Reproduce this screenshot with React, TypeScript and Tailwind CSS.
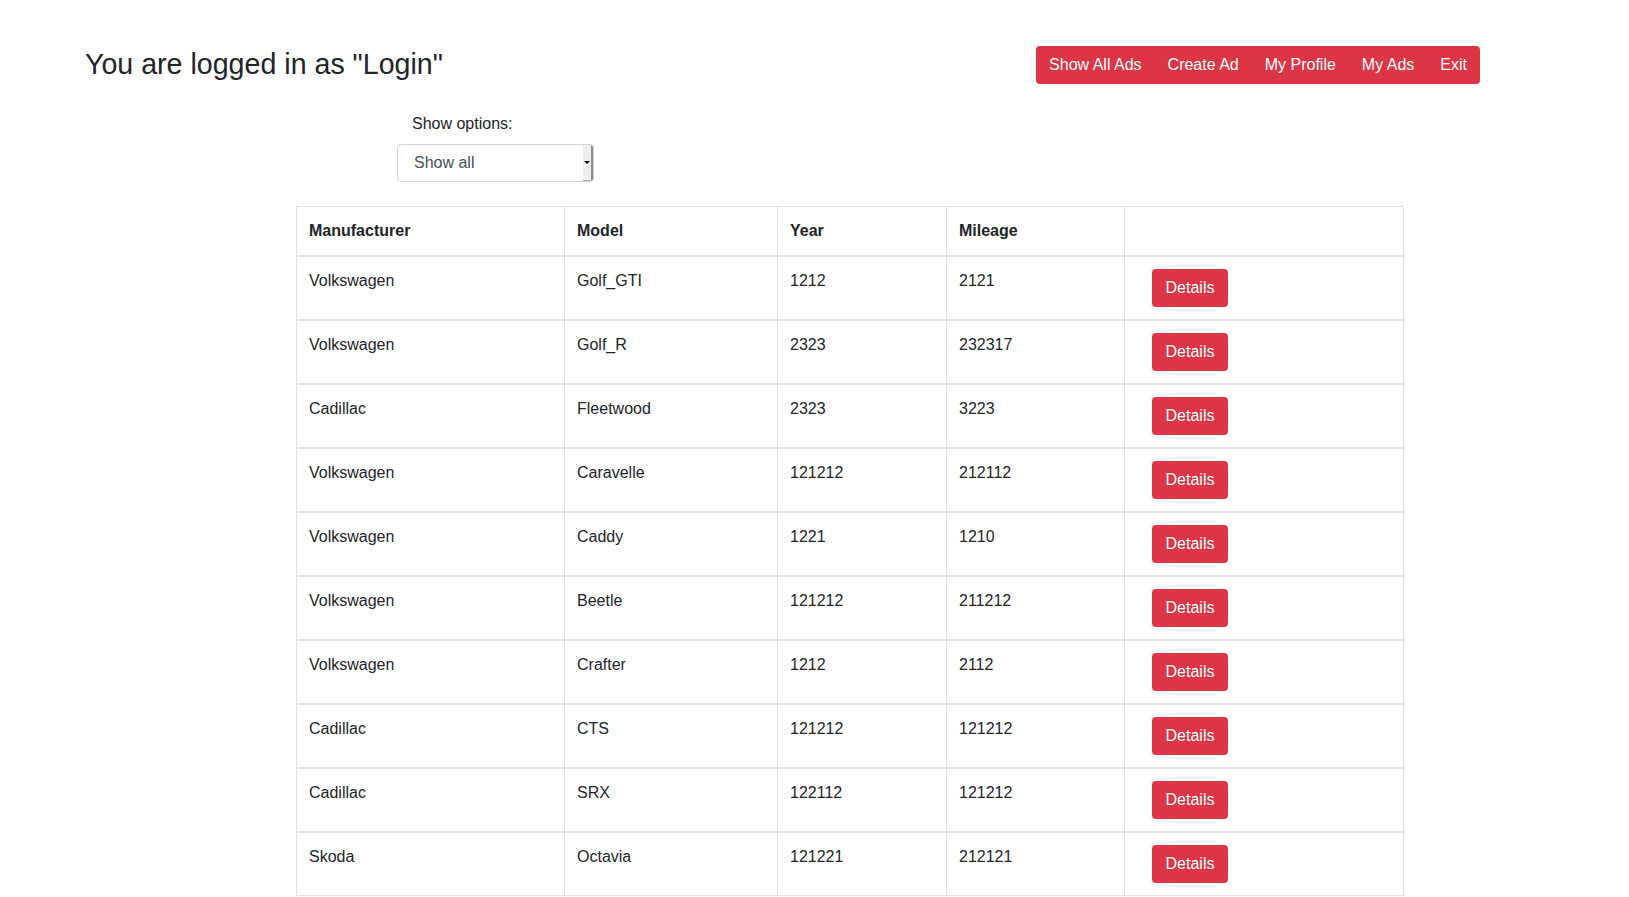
import React from "react";

const rows = [
  ["Volkswagen", "Golf_GTI", "1212", "2121"],
  ["Volkswagen", "Golf_R", "2323", "232317"],
  ["Cadillac", "Fleetwood", "2323", "3223"],
  ["Volkswagen", "Caravelle", "121212", "212112"],
  ["Volkswagen", "Caddy", "1221", "1210"],
  ["Volkswagen", "Beetle", "121212", "211212"],
  ["Volkswagen", "Crafter", "1212", "2112"],
  ["Cadillac", "CTS", "121212", "121212"],
  ["Cadillac", "SRX", "122112", "121212"],
  ["Skoda", "Octavia", "121221", "212121"],
];

const navItems = ["Show All Ads", "Create Ad", "My Profile", "My Ads", "Exit"];

export default function App() {
  return (
    <div className="min-h-screen bg-white font-['Liberation_Sans',Arial,sans-serif] text-[#212529] text-base">
      <div className="flex items-start justify-between pt-[46px] pl-[85px] pr-[149px]">
        <h3 className="mt-[1px] text-[28.6px] leading-[1.2] font-normal">You are logged in as "Login"</h3>
        <nav className="flex h-[38px] items-center rounded-[4px] bg-[#dc3545]">
          {navItems.map((n) => (
            <a key={n} className="px-[13px] text-base leading-6 text-white cursor-pointer">
              {n}
            </a>
          ))}
        </nav>
      </div>

      <div className="pl-[397px]">
        <label className="mt-[28px] mb-2 block pl-[15px] leading-6">Show options:</label>
        <div className="flex h-[38px] w-[197px] items-stretch overflow-hidden rounded-[4px] border border-[#ced4da] bg-white">
          <div className="flex flex-1 items-center pl-4 text-[#495057]">Show all</div>
          <div className="flex w-[10px] items-center justify-center border-b border-r-2 border-b-[#a8a8a8] border-r-[#8c8c8c] bg-[#efefef]">
            <div className="h-0 w-0 border-l-[3px] border-r-[3px] border-t-[3px] border-l-transparent border-r-transparent border-t-black" />
          </div>
        </div>
      </div>

      <div className="mt-[24px] pl-[296px]">
        <table className="w-[1107px] table-fixed border-collapse">
          <colgroup>
            <col className="w-[268px]" />
            <col className="w-[213px]" />
            <col className="w-[169px]" />
            <col className="w-[178px]" />
            <col className="w-[279px]" />
          </colgroup>
          <thead>
            <tr>
              {["Manufacturer", "Model", "Year", "Mileage", ""].map((h, i) => (
                <th
                  key={i}
                  className="border border-b-2 border-[#dee2e6] py-3 pl-3 pr-3 text-left align-bottom font-bold leading-6"
                >
                  {h}
                </th>
              ))}
            </tr>
          </thead>
          <tbody>
            {rows.map((r, i) => (
              <tr key={i}>
                {r.map((c, j) => (
                  <td key={j} className="border border-t-2 border-[#dee2e6] py-3 pl-3 pr-3 align-top leading-6">
                    {c}
                  </td>
                ))}
                <td className="border border-t-2 border-[#dee2e6] py-3 pl-3 pr-3 align-top">
                  <div className="h-[38px]">
                    <button className="ml-[15px] h-[38px] w-[76px] rounded-[4px] bg-[#dc3545] text-center leading-6 text-white">
                      Details
                    </button>
                  </div>
                </td>
              </tr>
            ))}
          </tbody>
        </table>
      </div>
    </div>
  );
}
